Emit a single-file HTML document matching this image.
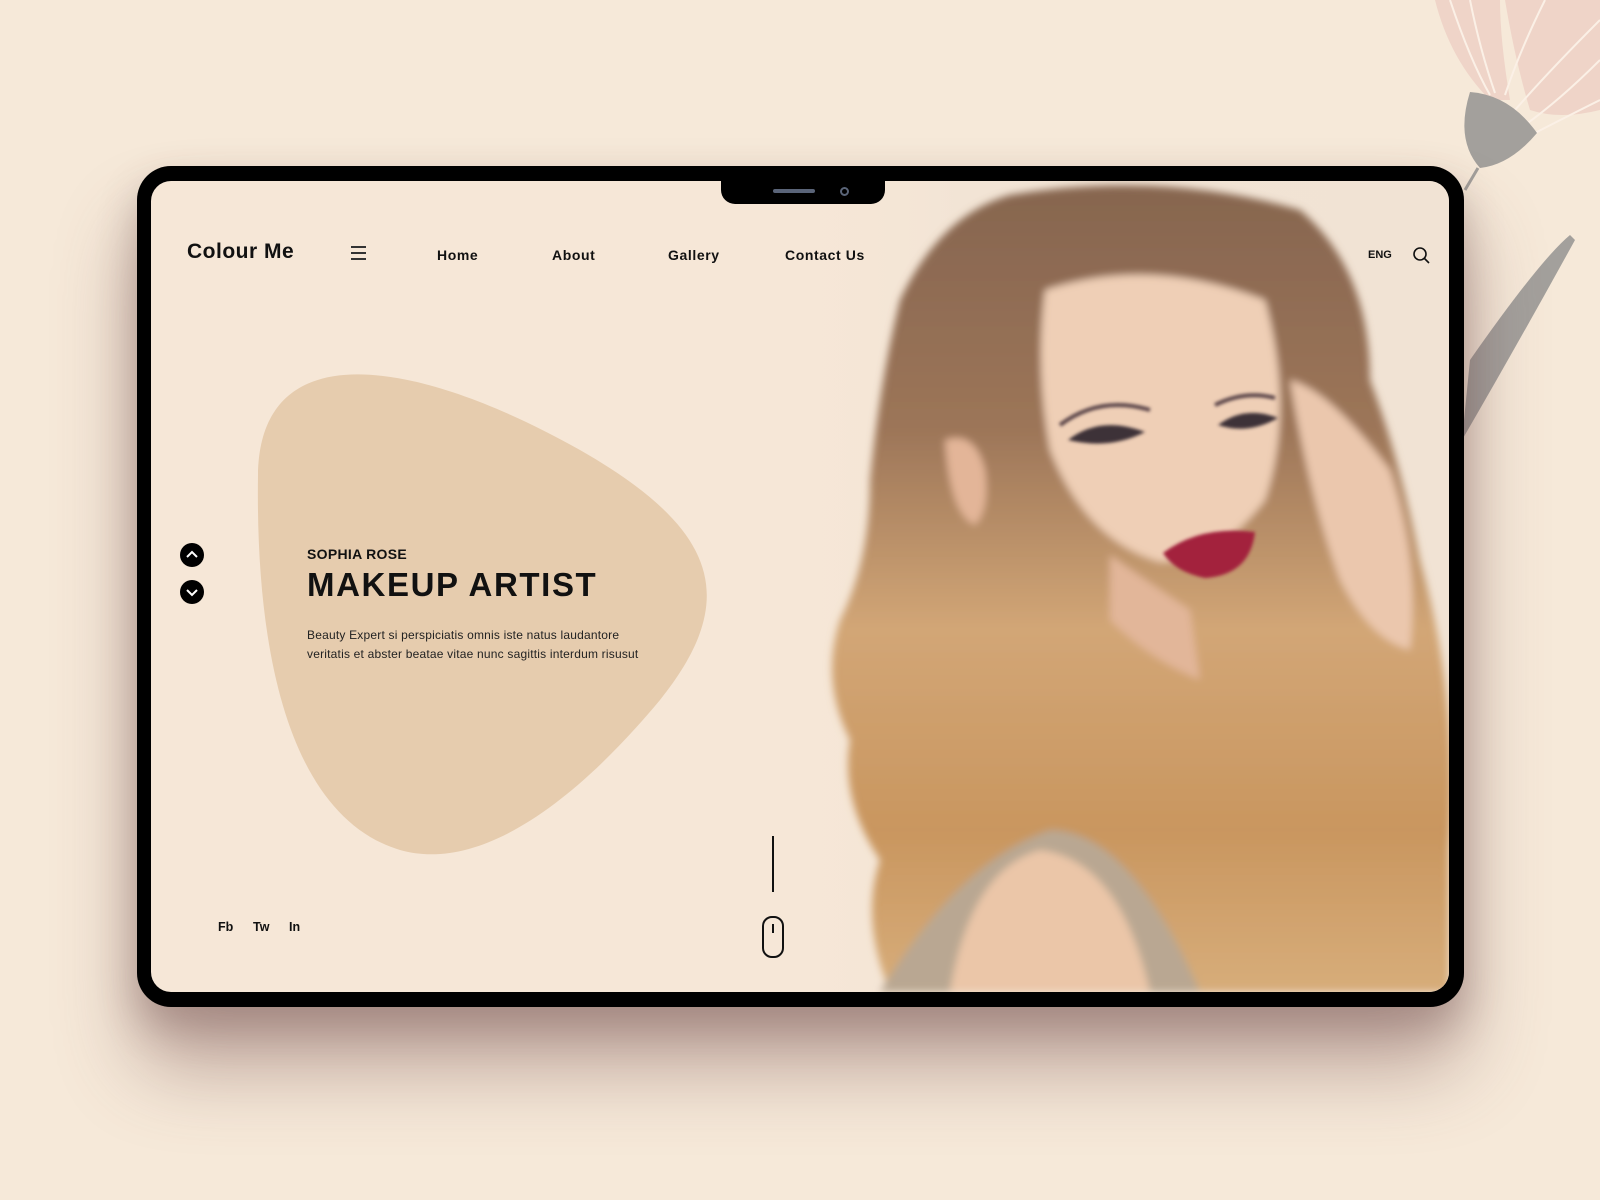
<!DOCTYPE html>
<html><head><meta charset="utf-8"><style>
html,body{margin:0;padding:0}
body{width:1600px;height:1200px;background:#f6e9d9;position:relative;overflow:hidden;font-family:"Liberation Sans",sans-serif;color:#111}
.abs{position:absolute}
.dev{left:137px;top:166px;width:1327px;height:841px;background:#000;border-radius:34px;box-shadow:0 60px 80px rgba(120,80,80,.45),0 20px 40px rgba(90,60,60,.3)}
.scr{left:151px;top:181px;width:1298px;height:811px;background:#f6e7d7;border-radius:20px;overflow:hidden}
.nav{font-size:14px;font-weight:bold;letter-spacing:.6px}
</style></head><body>
<svg class="abs" style="left:0;top:0" width="1600" height="1200">
 <g fill="#efd4c8">
  <path d="M1435 0 Q1450 60 1490 100 L1510 100 Q1500 40 1500 0Z"/>
  <path d="M1505 0 L1600 0 L1600 110 Q1560 120 1530 110 Q1515 60 1505 0Z"/>
 </g>
 <g stroke="#fbf0e6" stroke-width="2" fill="none">
  <path d="M1450 0 Q1470 60 1490 95"/><path d="M1470 0 Q1480 50 1495 93"/>
  <path d="M1545 0 Q1520 50 1505 95"/><path d="M1600 20 Q1550 70 1515 110"/>
  <path d="M1600 60 Q1560 100 1525 125"/><path d="M1600 100 Q1560 120 1535 133"/>
 </g>
 <path d="M1470 92 Q1510 95 1537 133 Q1510 165 1480 168 Q1455 140 1470 92Z" fill="#a3a09c"/>
 <path d="M1478 168 L1465 190" stroke="#a3a09c" stroke-width="3"/>
 <path d="M1570 235 Q1540 260 1470 360 L1462 440 Q1520 340 1575 240Z" fill="#a3a09c"/>
</svg>
<div class="abs dev"></div>
<div class="abs scr">
 <svg class="abs" style="left:0;top:0" width="1298" height="811" viewBox="151 181 1298 811">
  <defs><filter id="b"><feGaussianBlur stdDeviation="4"/></filter><filter id="b2"><feGaussianBlur stdDeviation="1.5"/></filter>
  <linearGradient id="bg" x1="0" y1="0" x2="1" y2="0"><stop offset="0" stop-color="#f6e7d7" stop-opacity="0"/><stop offset=".3" stop-color="#f2e4d5"/><stop offset="1" stop-color="#f1e3d4"/></linearGradient>
  <linearGradient id="h" x1="0" y1="0" x2="0" y2="1"><stop offset="0" stop-color="#86654f"/><stop offset=".3" stop-color="#9c7558"/><stop offset=".55" stop-color="#d2a676"/><stop offset=".8" stop-color="#c9965f"/><stop offset="1" stop-color="#d7ad7a"/></linearGradient></defs>
  <rect x="760" y="181" width="690" height="811" fill="url(#bg)"/>
  <path d="M258 475 C260 330 420 360 580 450 C720 530 740 600 660 700 C560 820 470 870 400 850 C300 820 255 680 258 475Z" fill="#e6ccae"/>
  <g filter="url(#b)">
   <path d="M1010 195 Q1160 170 1300 210 Q1370 270 1370 380 Q1400 460 1420 560 Q1460 700 1449 850 L1449 992 L890 992 Q860 920 880 860 Q840 800 850 740 Q820 680 840 620 Q870 560 870 480 Q880 380 900 300 Q940 215 1010 195Z" fill="url(#h)"/>
   <path d="M1045 290 Q1150 255 1265 300 Q1295 410 1265 500 Q1220 560 1160 562 Q1085 540 1050 450 Q1035 370 1045 290Z" fill="#efcfb6"/>
   <path d="M945 440 Q975 430 985 470 Q990 510 975 525 Q950 515 945 440Z" fill="#e3b598"/>
   <path d="M1290 380 Q1330 390 1390 470 Q1420 560 1410 650 Q1370 640 1340 580 Q1310 500 1290 380Z" fill="#ebc7ad"/>
   <path d="M1110 555 Q1160 590 1190 610 L1200 680 Q1150 660 1110 620Z" fill="#e2b699"/>
   <path d="M880 992 Q960 860 1050 830 Q1130 830 1200 992Z" fill="#b9a792"/>
   <path d="M950 992 Q970 870 1040 850 Q1120 860 1150 992Z" fill="#ebc6a8"/>
  </g>
  <g filter="url(#b2)">
   <path d="M1068 440 Q1100 415 1145 432 Q1110 450 1068 440Z" fill="#3e3038"/>
   <path d="M1218 425 Q1245 405 1278 418 Q1248 435 1218 425Z" fill="#3e3038"/>
   <path d="M1060 425 Q1100 395 1150 410" stroke="#5a4448" stroke-width="4" fill="none"/>
   <path d="M1215 405 Q1245 390 1275 398" stroke="#5a4448" stroke-width="4" fill="none"/>
   <path d="M1163 553 Q1200 525 1255 532 Q1250 575 1205 578 Q1175 572 1163 553Z" fill="#a3203e"/>
  </g>
 </svg>
 <div class="abs" style="left:570px;top:0;width:164px;height:23px;background:#000;border-radius:0 0 14px 14px"></div>
 <div class="abs" style="left:622px;top:8px;width:42px;height:4px;background:#5a6478;border-radius:2px"></div>
 <div class="abs" style="left:689px;top:6px;width:5px;height:5px;border:2px solid #5a6478;border-radius:50%"></div>
 <div class="abs" style="left:36px;top:59px;font-size:21px;font-weight:bold;letter-spacing:.5px">Colour Me</div>
 <div class="abs" style="left:200px;top:65px;width:15px">
  <div style="height:2px;background:#333;margin-bottom:4px"></div><div style="height:2px;background:#333;margin-bottom:4px"></div><div style="height:2px;background:#333"></div></div>
 <div class="abs nav" style="left:286px;top:66px">Home</div>
 <div class="abs nav" style="left:401px;top:66px">About</div>
 <div class="abs nav" style="left:517px;top:66px">Gallery</div>
 <div class="abs nav" style="left:634px;top:66px">Contact Us</div>
 <div class="abs" style="left:1217px;top:68px;font-size:11px;font-weight:bold">ENG</div>
 <svg class="abs" style="left:1261px;top:65px" width="20" height="20"><circle cx="8" cy="8" r="6" fill="none" stroke="#111" stroke-width="1.6"/><path d="M12.5 12.5 L17 17" stroke="#111" stroke-width="1.6"/></svg>
 <svg class="abs" style="left:28px;top:362px" width="26" height="66">
  <circle cx="13" cy="12" r="12" fill="#000"/><path d="M8 14 L13 9 L18 14" stroke="#fff" stroke-width="2" fill="none"/>
  <circle cx="13" cy="49" r="12" fill="#000"/><path d="M8 47 L13 52 L18 47" stroke="#fff" stroke-width="2" fill="none"/></svg>
 <div class="abs" style="left:156px;top:365px;font-size:14px;font-weight:bold;letter-spacing:.3px">SOPHIA ROSE</div>
 <div class="abs" style="left:156px;top:385px;font-size:33px;font-weight:bold;letter-spacing:1.6px">MAKEUP ARTIST</div>
 <div class="abs" style="left:156px;top:445px;font-size:12px;line-height:19px;color:#222;letter-spacing:.2px">Beauty Expert si perspiciatis omnis iste natus laudantore<br>veritatis et abster beatae vitae nunc sagittis interdum risusut</div>
 <div class="abs" style="left:67px;top:739px;font-size:12.5px;font-weight:bold">Fb</div>
 <div class="abs" style="left:102px;top:739px;font-size:12.5px;font-weight:bold">Tw</div>
 <div class="abs" style="left:138px;top:739px;font-size:12.5px;font-weight:bold">In</div>
 <div class="abs" style="left:621px;top:655px;width:2px;height:56px;background:#111"></div>
 <div class="abs" style="left:611px;top:735px;width:18px;height:38px;border:2px solid #111;border-radius:10px"></div>
 <div class="abs" style="left:621px;top:743px;width:2px;height:9px;background:#111"></div>
</div>
</body></html>
